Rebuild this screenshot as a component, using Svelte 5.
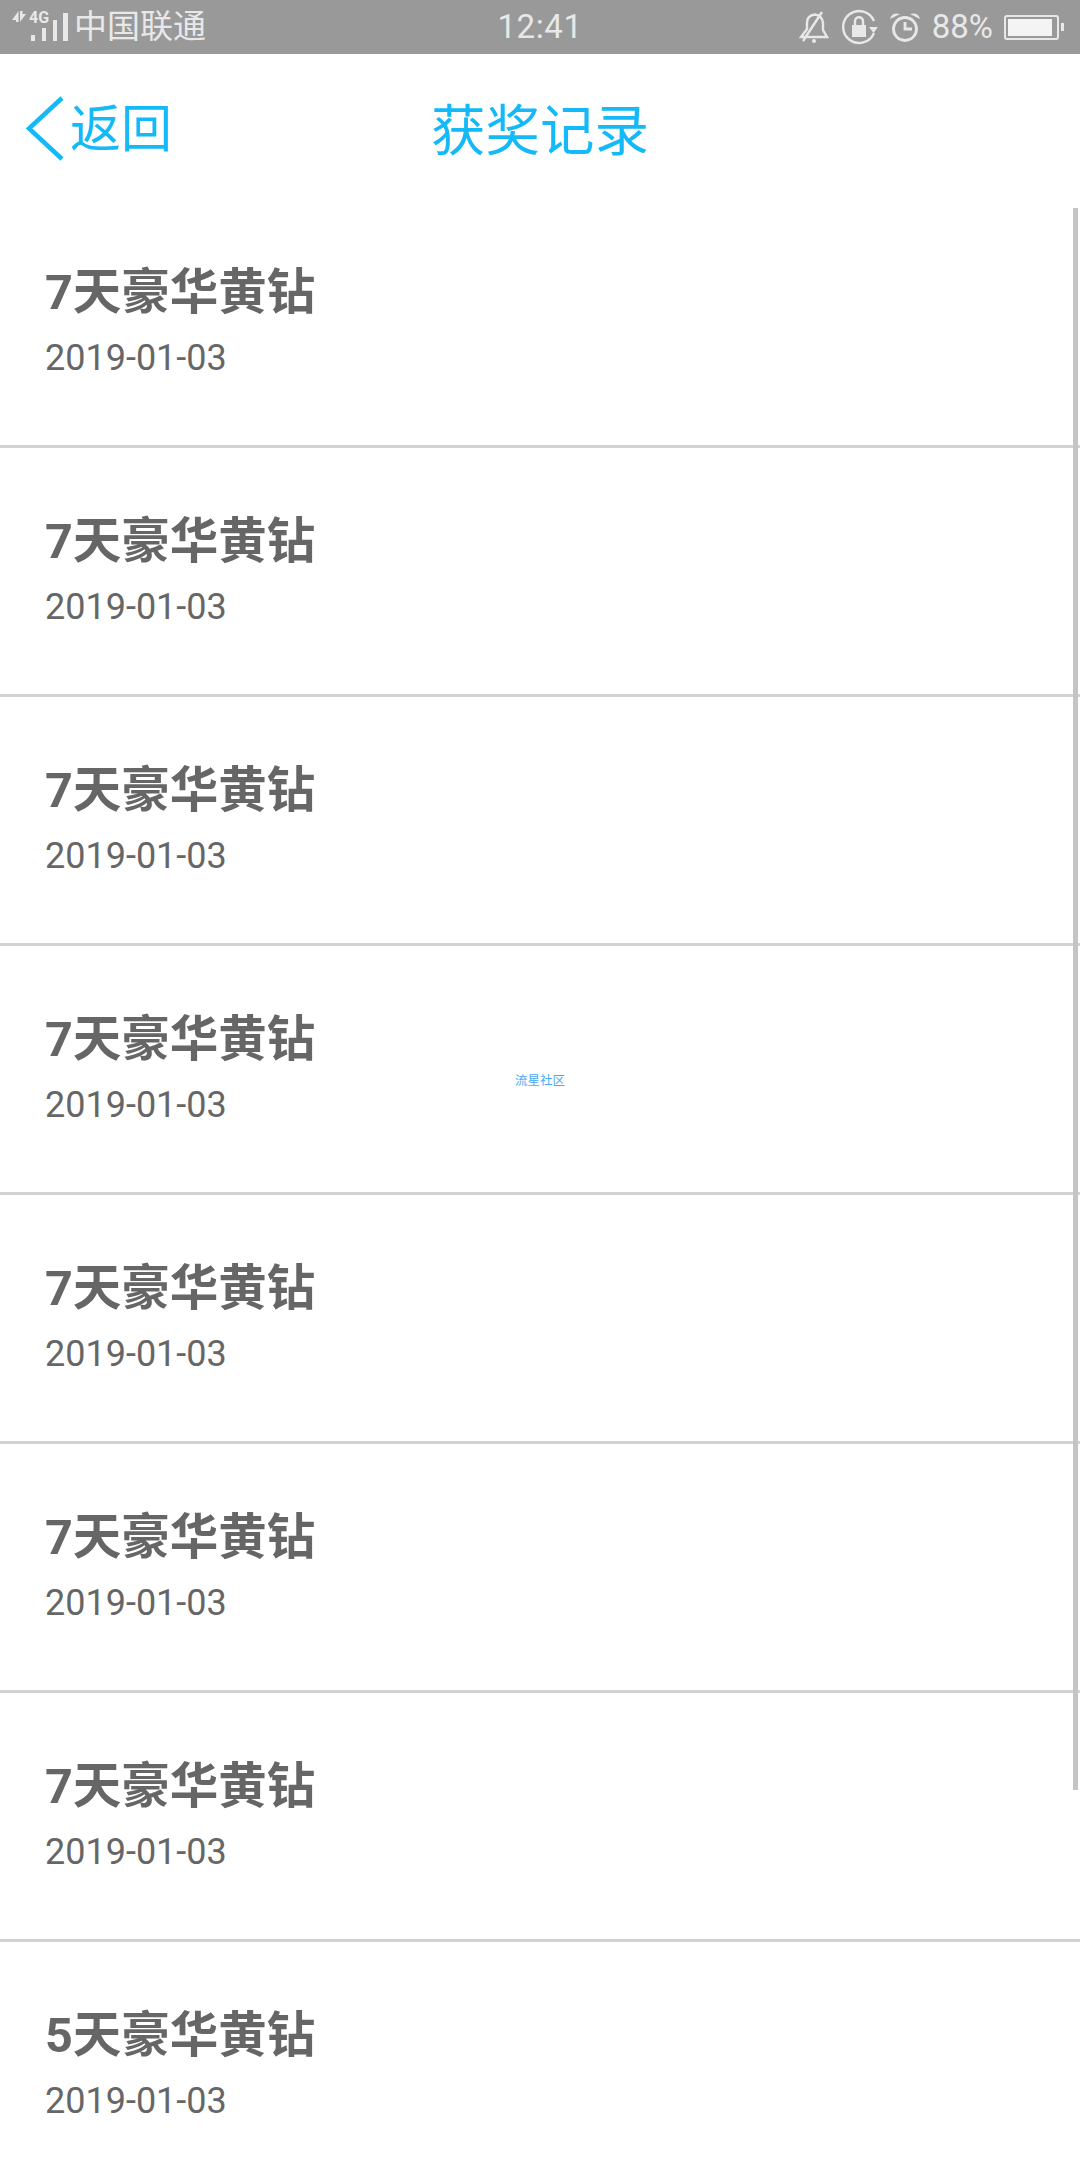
<script>
  const records = [
    { name: "7天豪华黄钻", date: "2019-01-03" },
    { name: "7天豪华黄钻", date: "2019-01-03" },
    { name: "7天豪华黄钻", date: "2019-01-03" },
    { name: "7天豪华黄钻", date: "2019-01-03" },
    { name: "7天豪华黄钻", date: "2019-01-03" },
    { name: "7天豪华黄钻", date: "2019-01-03" },
    { name: "7天豪华黄钻", date: "2019-01-03" },
    { name: "5天豪华黄钻", date: "2019-01-03" }
  ];
</script>

<div class="page">
  <div class="statusbar">
    <div class="status-left">
      <svg class="signal" width="60" height="34" viewBox="0 0 60 34">
        <path d="M0 10 L6.500 1 V12 H4 V10 Z M8 1 H10.500 V4 H14 L8 12 Z" fill="#e8e8e8" />
        <text x="17" y="13" class="net">4G</text>
        <rect x="19" y="25" width="4" height="6" fill="#e8e8e8" />
        <rect x="30" y="18" width="4" height="13" fill="#e8e8e8" />
        <rect x="41" y="10" width="4" height="21" fill="#e8e8e8" />
        <rect x="51" y="3" width="5" height="28" fill="#e8e8e8" />
      </svg>
      <span class="carrier">中国联通</span>
    </div>
    <span class="time">12:41</span>
    <div class="status-right">
      <svg width="30" height="32" viewBox="0 0 30 32" fill="none" stroke="#e8e8e8" stroke-width="2.400">
        <path d="M2 26 H28 L24 19 V12 C24 7 20 4 16 3.500 C11 4 8 7 8 12 V18 Z" />
        <path d="M4 30 L23 1" />
        <circle cx="15" cy="30" r="2" fill="#e8e8e8" stroke="none" />
      </svg>
      <svg class="lock" width="38" height="38" viewBox="0 0 38 38" fill="none" stroke="#e8e8e8" stroke-width="2.400">
        <path d="M34 25 A16 16 0 1 1 34 13" />
        <path d="M29 19 H38 L33.500 25 Z" fill="#e8e8e8" stroke="none" />
        <rect x="12" y="17" width="14" height="12" fill="#e8e8e8" stroke="none" />
        <path d="M15 17 V13 C15 8 23 8 23 13 V17" />
      </svg>
      <svg width="32" height="30" viewBox="0 0 32 30" fill="none" stroke="#e8e8e8" stroke-width="2.800">
        <circle cx="16" cy="17" r="11.500" />
        <path d="M16 10 V17 H23" />
        <path d="M1 7 Q3 0 11 2 Z M31 7 Q29 0 21 2 Z" fill="#e8e8e8" stroke="none" />
      </svg>
      <span class="percent">88%</span>
      <div class="battery">
        <div class="battery-body"><div class="battery-fill"></div></div>
        <div class="battery-nub"></div>
      </div>
    </div>
  </div>

  <div class="header">
    <div class="back">
      <svg width="40" height="66" viewBox="0 0 40 66" fill="none" stroke="#14b9f8" stroke-width="4.500">
        <path d="M38 2 L5 32.500 L38 63" />
      </svg>
      <span>返回</span>
    </div>
    <div class="title">获奖记录</div>
    <div></div>
  </div>

  <div class="list">
    {#each records as item}
      <div class="row">
        <div class="name">{item.name}</div>
        <div class="date">{item.date}</div>
      </div>
    {/each}
  </div>

  <div class="scrollbar"></div>
  <div class="watermark">流星社区</div>
</div>

<style>
  :global(body) {
    margin: 0;
    background: #fff;
  }

  .page {
    position: relative;
    width: 1080px;
    height: 2160px;
    overflow: hidden;
    background: #fff;
    font-family: Roboto, "Noto Sans CJK SC", sans-serif;
  }

  .statusbar {
    display: grid;
    grid-template-columns: 1fr auto 1fr;
    align-items: center;
    height: 54px;
    background: #999;
    color: #e8e8e8;
    font-size: 33px;
  }

  .status-left {
    display: flex;
    align-items: center;
    padding-left: 12px;
  }

  .signal {
    flex: none;
  }

  .net {
    font-family: Roboto, sans-serif;
    font-size: 16px;
    font-weight: 700;
    fill: #e8e8e8;
  }

  .carrier {
    margin-left: 2px;
    line-height: 54px;
  }

  .time {
    line-height: 54px;
    letter-spacing: 0.6px;
  }

  .status-right {
    display: flex;
    align-items: center;
    justify-content: flex-end;
    gap: 11px;
    padding-right: 16px;
  }

  .percent {
    line-height: 54px;
  }

  .battery {
    display: flex;
    align-items: center;
    gap: 2px;
  }

  .battery-body {
    box-sizing: border-box;
    width: 55px;
    height: 25px;
    padding: 2px;
    border: 2px solid #e8e8e8;
    border-radius: 3px;
  }

  .battery-fill {
    width: 44px;
    height: 100%;
    background: #f4f4f4;
  }

  .battery-nub {
    width: 3px;
    height: 8px;
    background: #e8e8e8;
  }

  .header {
    display: grid;
    grid-template-columns: 1fr auto 1fr;
    align-items: center;
    height: 145px;
    color: #14b9f8;
  }

  .back {
    display: flex;
    align-items: center;
    gap: 6px;
    padding-left: 24px;
    font-size: 51px;
  }

  .back svg {
    margin-top: 5px;
  }

  .back span {
    margin-bottom: 4px;
  }

  .title {
    font-size: 54.500px;
  }

  .row {
    box-sizing: border-box;
    height: 249px;
    padding: 64px 0 0 45px;
    border-bottom: 3px solid #d2d2d2;
    color: #666;
  }

  .name {
    font-size: 48.500px;
    font-weight: 700;
    line-height: 60px;
  }

  .date {
    margin-top: 14px;
    font-size: 36px;
    line-height: 42px;
  }

  .scrollbar {
    position: absolute;
    top: 208px;
    right: 2px;
    width: 5px;
    height: 1582px;
    background: #c4c4c4;
  }

  .watermark {
    position: absolute;
    top: 1073px;
    left: 515px;
    font-size: 12.500px;
    line-height: 16px;
    color: #4aa8f6;
  }
</style>
